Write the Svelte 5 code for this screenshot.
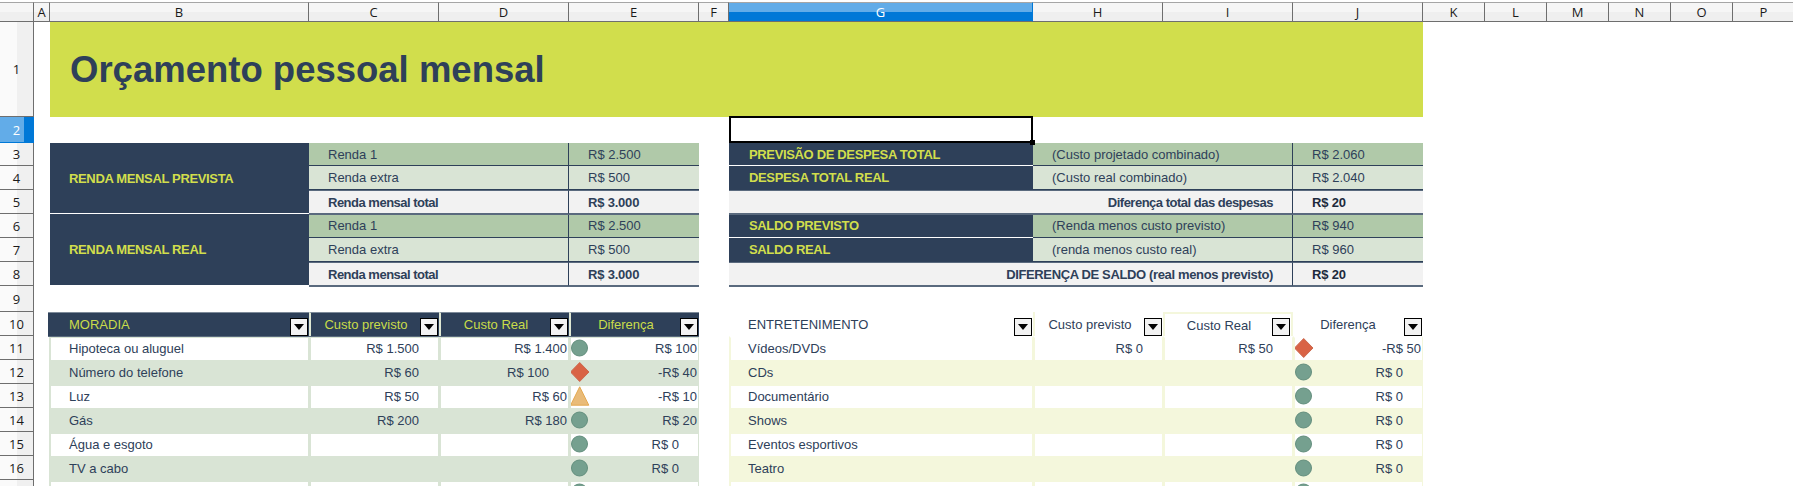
<script>
  const cols = ['A','B','C','D','E','F','G','H','I','J','K','L','M','N','O','P'];
  const e = (k = '') => ({ k });
  const c = (t, k = '', extra = {}) => ({ t, k, ...extra });

  const bands = (a, b, cc, g, h, j, shade) => [
    e(), ...(a ? [c(a, 'navy lab', { r: 3 })] : []),
    c(b, `${shade} pad line`, { s: 2 }), c(cc, `${shade} pad`), e(),
    c(g, 'navy lab gl'), c(h, `${shade} pad line`, { s: 2 }), c(j, `${shade} pad`)
  ];
  const total = (t1, v1, t2, v2, wide = '') => [
    e(), c(t1, 'total pad line', { s: 2 }), c(v1, 'total pad value'), e(),
    c(t2, `total right line ${wide}`, { s: 3 }), c(v2, 'total pad value strong')
  ];

  const left = [
    ['Hipoteca ou aluguel', 'R$ 1.500', 'R$ 1.400', 'p2', 'c', 'R$ 100', 'p2'],
    ['Número do telefone', 'R$ 60', 'R$ 100', 'p20', 'd', '-R$ 40', 'p2'],
    ['Luz', 'R$ 50', 'R$ 60', 'p2', 't', '-R$ 10', 'p2'],
    ['Gás', 'R$ 200', 'R$ 180', 'p2', 'c', 'R$ 20', 'p2'],
    ['Água e esgoto', '', '', 'p20', 'c', 'R$ 0', 'p20'],
    ['TV a cabo', '', '', 'p20', 'c', 'R$ 0', 'p20'],
    ['', '', '', 'p20', 'c', '', 'p20']
  ];
  const right = [
    ['Vídeos/DVDs', 'R$ 0', 'R$ 50', 'd', '-R$ 50', 'p2'],
    ['CDs', '', '', 'c', 'R$ 0', 'p20'],
    ['Documentário', '', '', 'c', 'R$ 0', 'p20'],
    ['Shows', '', '', 'c', 'R$ 0', 'p20'],
    ['Eventos esportivos', '', '', 'c', 'R$ 0', 'p20'],
    ['Teatro', '', '', 'c', 'R$ 0', 'p20'],
    ['', '', '', 'c', '', 'p20']
  ];

  const dataRow = (i) => {
    const l = left[i], r = right[i];
    const ls = i % 2 ? 'alt' : 'wl';
    const rs = i % 2 ? 'alty' : 'wr';
    const top = i === 0 ? ' nt' : '';
    return [
      e(),
      c(l[0], `${ls} pad first`),
      c(l[1], `${ls} num p20`),
      c(l[2], `${ls} num ${l[3]}`),
      c(l[5], `${ls} num ic ${l[6]}`, { icon: l[4] }),
      e(),
      c(r[0], `${rs}${top} pad`),
      c(r[1], `${rs}${top} num p20`),
      c(r[2], `${rs}${top} num p20`),
      c(r[4], `${rs}${top} num ic ${r[5]}`, { icon: r[3] })
    ];
  };

  const rows = [
    { n: 1, cells: [e(), c('Orçamento pessoal mensal', 'title', { s: 9 })] },
    { n: 2, sel: true, cells: [e(), e(), e(), e(), e(), e(), c('', 'selected')] },
    { n: 3, cells: bands('RENDA MENSAL PREVISTA', 'Renda 1', 'R$ 2.500', 'PREVISÃO DE DESPESA TOTAL', '(Custo projetado combinado)', 'R$ 2.060', 'g1') },
    { n: 4, cells: bands('', 'Renda extra', 'R$ 500', 'DESPESA TOTAL REAL', '(Custo real combinado)', 'R$ 2.040', 'g2') },
    { n: 5, cells: total('Renda mensal total', 'R$ 3.000', 'Diferença total das despesas', 'R$ 20') },
    { n: 6, cells: bands('RENDA MENSAL REAL', 'Renda 1', 'R$ 2.500', 'SALDO PREVISTO', '(Renda menos custo previsto)', 'R$ 940', 'g1') },
    { n: 7, cells: bands('', 'Renda extra', 'R$ 500', 'SALDO REAL', '(renda menos custo real)', 'R$ 960', 'g2') },
    { n: 8, cells: total('Renda mensal total', 'R$ 3.000', 'DIFERENÇA DE SALDO (real menos previsto)', 'R$ 20', 'wide') },
    { n: 9, cells: [] },
    { n: 10, cells: [
      e(),
      c('MORADIA', 'head pad first', { f: 1 }),
      c('Custo previsto', 'head ctr', { f: 1 }),
      c('Custo Real', 'head ctr', { f: 1 }),
      c('Diferença', 'head ctr', { f: 1 }),
      e(),
      c('ENTRETENIMENTO', 'plain pad', { f: 1 }),
      c('Custo previsto', 'plain ctr ph', { f: 1 }),
      c('Custo Real', 'plain ctr pi', { f: 1 }),
      c('Diferença', 'plain ctr pj', { f: 1 })
    ] },
    ...left.map((_, i) => ({ n: i < 6 ? 11 + i : '', cells: dataRow(i) }))
  ];
</script>

<div class="sheet">
  <div class="colhead corner"></div>
  {#each cols as name}
    <div class="colhead" class:active={name === 'G'}>{name}</div>
  {/each}

  {#each rows as row}
    <div class="rowhead" class:active={row.sel}>{row.n}</div>
    {#each row.cells as cell}
      <div class="cell {cell.k}" style:grid-column={cell.s ? `span ${cell.s}` : null} style:grid-row={cell.r ? `span ${cell.r}` : null}>
        {#if cell.icon === 'c'}
          <svg class="mark" viewBox="0 0 20 20" aria-hidden="true"><circle cx="9.5" cy="10" r="8" fill="#75a08f" stroke="#648f7e" /></svg>
        {:else if cell.icon === 'd'}
          <svg class="mark" viewBox="0 0 20 20" aria-hidden="true"><path d="M9.7 0.5 19 10 9.7 19.5 0.5 10Z" fill="#d96345" stroke="#cb6a50" /></svg>
        {:else if cell.icon === 't'}
          <svg class="mark" viewBox="0 0 20 20" aria-hidden="true"><path d="M9.7 0.8 18.8 19.2H0.6Z" fill="#e9bb78" stroke="#e3a850" /></svg>
        {/if}
        {#if cell.t}<span>{cell.t}</span>{/if}
        {#if cell.f}<span class="filter"><i></i></span>{/if}
        {#if cell.k === 'selected'}<span class="handle"></span>{/if}
      </div>
    {/each}
  {/each}
</div>

<style>
  :global(body) {
    margin: 0;
    background: #fff;
    overflow: hidden;
  }

  .sheet {
    display: grid;
    grid-template-columns: 34px 16px 259px 130px 130px 130px 30px 304px 130px 130px 130px 62px 62px 62px 62px 62px 62px;
    grid-template-rows: 22px 95px 26px 23px 24px 24px 24px 24px 24px 26px 24px repeat(7, 24px);
    width: 1793px;
    height: 486px;
    overflow: hidden;
    font: 13px "Liberation Sans", Arial, sans-serif;
    color: #2e4059;
  }

  .colhead,
  .rowhead {
    box-sizing: border-box;
    display: flex;
    align-items: center;
    justify-content: center;
    font: 13px "Open Sans", "Noto Sans", sans-serif;
    color: #1a1a1a;
    border: solid #6e6e6e;
  }

  .colhead {
    margin-top: 2px;
    border-width: 1px 1px 1px 0;
    border-top-color: #a6a6a6;
    background: linear-gradient(#f6f6f6 0 9px, #efefef 9px);
  }

  .colhead.active {
    color: #fff;
    background: linear-gradient(#62ace8 0 9px, #0078d7 9px);
    border-right-color: #0078d7;
  }

  .colhead.corner {
    border-left-width: 0;
  }

  .rowhead {
    grid-column: 1;
    border-width: 0 1px 1px 0;
    background: linear-gradient(90deg, #fafafa 0 17px, #f0f0f0 17px);
  }

  .rowhead.active {
    color: #fff;
    background: linear-gradient(90deg, #62ace8 0 24px, #0078d7 24px);
    border-color: #0078d7;
  }

  .cell {
    box-sizing: border-box;
    display: flex;
    align-items: center;
    position: relative;
    min-width: 0;
    white-space: nowrap;
  }

  .title {
    background: #d1de4c;
    padding-left: 20px;
    font-size: 36.5px;
    font-weight: 700;
  }

  .selected {
    margin-top: -1px;
    border: 2px solid #000;
    z-index: 2;
  }

  .handle {
    position: absolute;
    right: -4px;
    bottom: -4px;
    width: 5px;
    height: 5px;
    background: #000;
  }

  .pad {
    padding-left: 19px;
  }

  .navy {
    background: #2e4059;
    color: #d1de4c;
    font-weight: 700;
    letter-spacing: -0.35px;
    border-bottom: 1px solid #fff;
  }

  .lab {
    padding-left: 19px;
  }

  .gl {
    padding-left: 20px;
  }

  .g1,
  .g2 {
    border-bottom: 1px solid #2e4059;
  }

  .g1 {
    background: #b0c9a9;
  }

  .g2 {
    background: #d9e4d5;
  }

  .line {
    border-right: 1px solid #2e4059;
  }

  .total {
    background: #f2f2f2;
    font-weight: 700;
    letter-spacing: -0.5px;
    border-top: 1px solid #5a6a7e;
    border-bottom: 1px solid #5a6a7e;
    box-shadow: 0 -1px #2e4059, 0 1px #5a6a7e;
    z-index: 1;
  }

  .total.value {
    letter-spacing: -0.2px;
  }

  .right {
    justify-content: flex-end;
    padding-right: 19px;
  }

  .right.wide {
    letter-spacing: -0.36px;
  }

  .strong {
    color: #1d2a3c;
  }

  .head {
    background: #2e4059;
    color: #c9dc4a;
    border-top: 1px solid #7d8a99;
    border-left: 2px solid #dfe7d3;
    box-shadow: 0 1px #5a6a7e;
    z-index: 1;
  }

  .head.first {
    border-left: 0;
    margin-left: -2px;
    padding-left: 21px;
  }

  .plain {
    background: #fff;
  }

  .ph {
    border-left: 2px solid #f4f7dc;
  }

  .pi {
    border-left: 2px solid #f4f7dc;
    border-right: 2px solid #f4f7dc;
    border-top: 2px solid #f4f7dc;
  }

  .ctr {
    justify-content: center;
    padding-right: 18px;
  }

  .pj {
    padding-right: 20px;
  }

  .filter {
    position: absolute;
    right: 1px;
    bottom: 0;
    box-sizing: border-box;
    width: 18px;
    height: 18px;
    background: #f2f2f2;
    border: 1px solid #000;
    display: flex;
    align-items: center;
    justify-content: center;
  }

  .filter i {
    width: 0;
    height: 0;
    border-left: 5px solid transparent;
    border-right: 5px solid transparent;
    border-top: 6px solid #000;
  }

  .wl,
  .wr,
  .alt,
  .alty {
    border-left: 2px solid transparent;
    border-right: 1px solid transparent;
    border-top: 2px solid transparent;
    padding-bottom: 2px;
    overflow: hidden;
  }

  .wl {
    background: #fff;
    border-color: #d9e4d5;
  }

  .wr {
    background: #fff;
    border-color: #f4f7dc;
  }

  .wr.nt {
    border-top-color: #fff;
  }

  .alt {
    background: #d9e4d5;
  }

  .alty {
    background: #f4f7dc;
  }

  .wr.pad,
  .alty.pad {
    padding-left: 17px;
  }

  .first.wl,
  .first.alt {
    margin-left: -1px;
    padding-left: 18px;
  }

  .num {
    justify-content: flex-end;
  }

  .p2 {
    padding-right: 1px;
  }

  .p20 {
    padding-right: 19px;
  }

  .ic {
    justify-content: space-between;
  }

  .mark {
    width: 20px;
    height: 20px;
    flex: none;
    margin-left: -1px;
  }
</style>
